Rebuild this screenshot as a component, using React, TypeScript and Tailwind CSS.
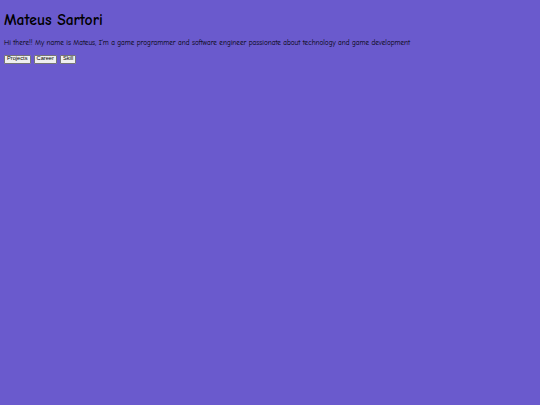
export default function App() {
  const links = ["Projects", "Career", "Skill"];
  return (
    <div className="min-h-screen bg-[#6a5acd] px-[4px] pt-[9px] text-black [font-family:'Comic_Sans_MS','Comic_Neue',cursive]">
      <h1 className="text-[15.6px] font-bold leading-[22px]">Mateus Sartori</h1>
      <p className="mt-[7px] text-[7.2px] leading-[10px]">
        Hi there!! My name is Mateus, I´m a game programmer and software engineer passionate about
        technology and game development
      </p>
      <div className="mt-[7px] flex gap-[3px]">
        {links.map((label) => (
          <button
            key={label}
            className="h-[8.5px] rounded-[1px] border border-[#767676] bg-[#efefef] px-[2px] text-[5.7px] leading-none text-black [font-family:'Liberation_Sans',Arial,sans-serif]"
          >
            {label}
          </button>
        ))}
      </div>
    </div>
  );
}
